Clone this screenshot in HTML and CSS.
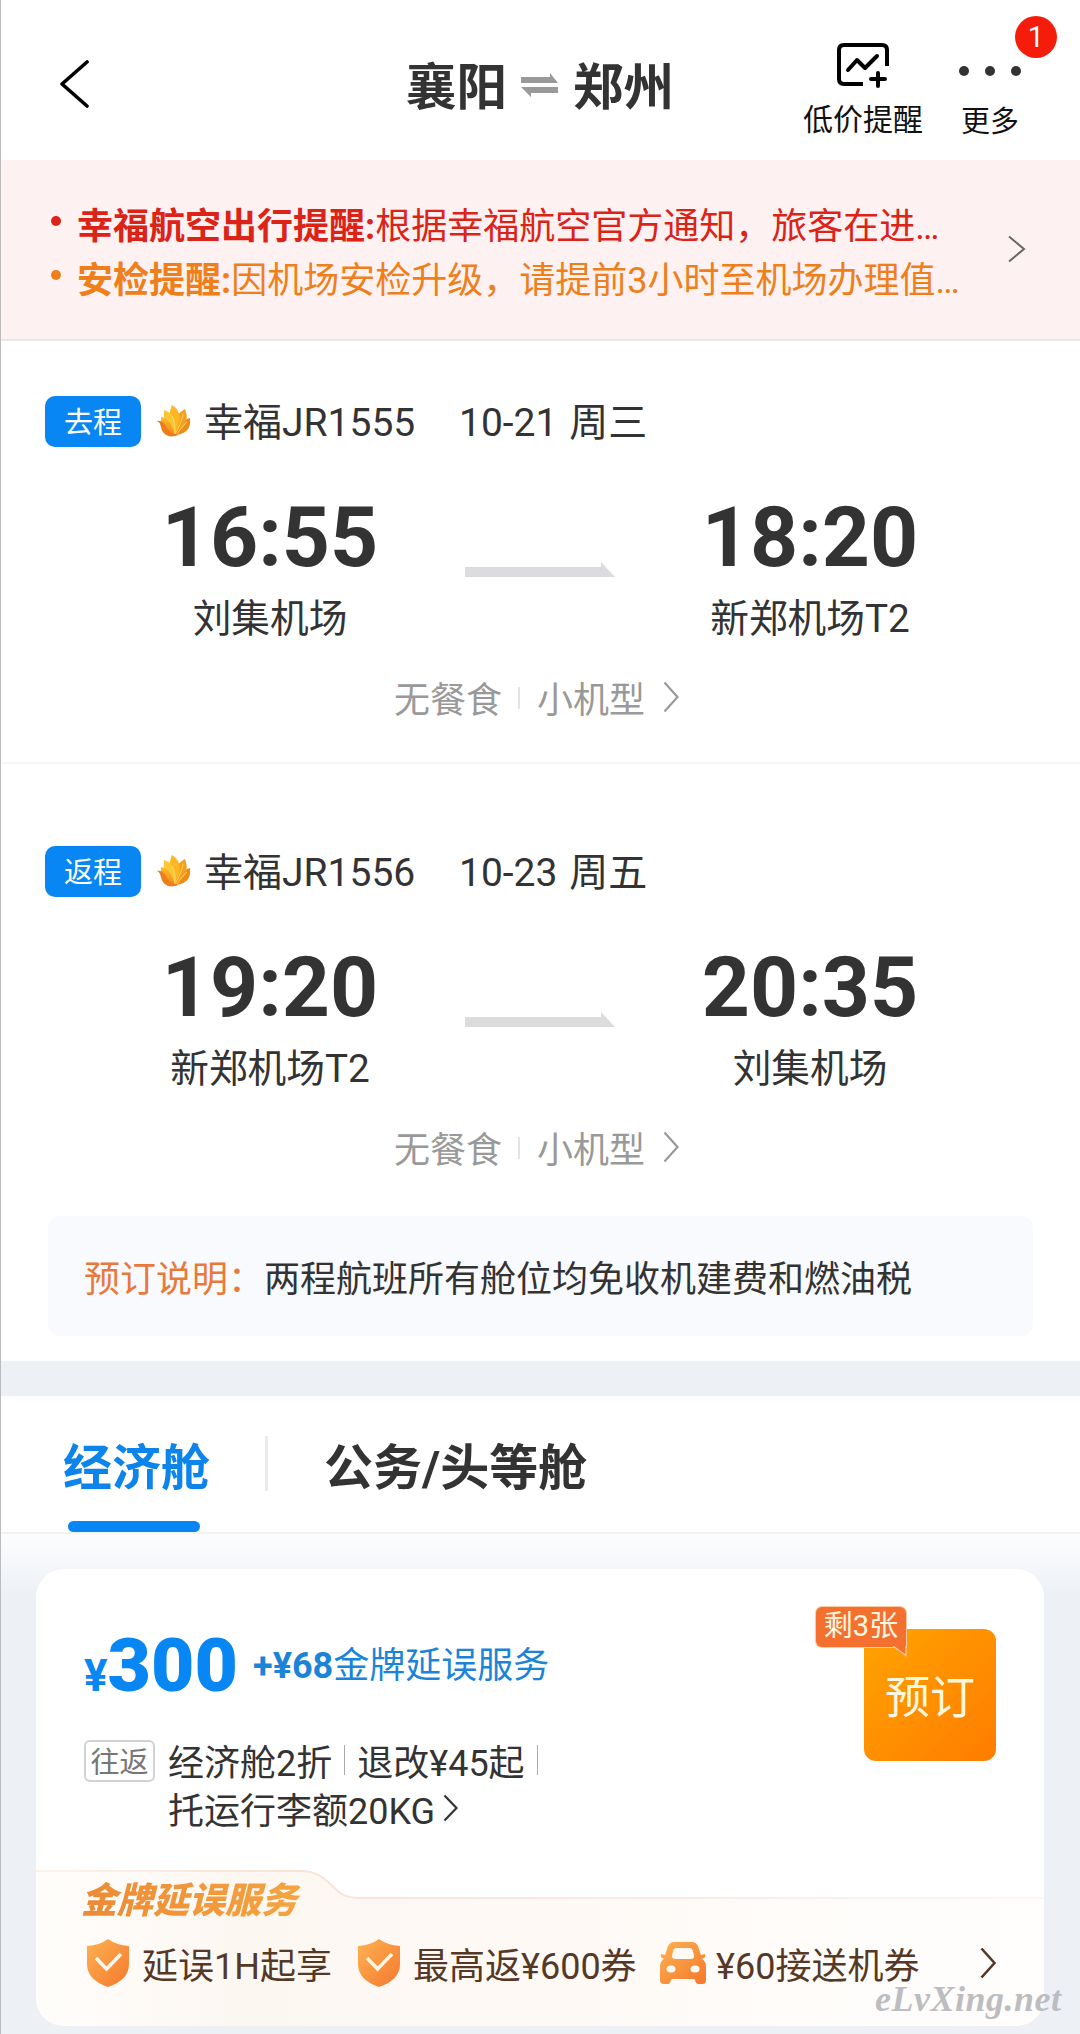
FILE: index.html
```html
<!DOCTYPE html>
<html lang="zh-CN">

<head>
    <meta charset="UTF-8">
    <title>襄阳 - 郑州</title>
    <link rel="stylesheet" href="styles.css">
</head>
<body>
    <!-- shared icons -->
    <svg class="defs" width="0" height="0">
        <defs>
            <linearGradient id="petal" x1="0" y1="0" x2="0" y2="1">
                <stop offset="0" stop-color="#fcbb28"/>
                <stop offset="1" stop-color="#f28a1c"/>
            </linearGradient>
            <linearGradient id="orange" x1="0" y1="0" x2="1" y2="1">
                <stop offset="0" stop-color="#fdb252"/>
                <stop offset="1" stop-color="#f5782d"/>
            </linearGradient>
            <linearGradient id="panel" x1="0" y1="0" x2="1" y2="0">
                <stop offset="0" stop-color="#fffdfb"/>
                <stop offset="0.2" stop-color="#fdf7f2"/>
                <stop offset="0.5" stop-color="#fef9f5"/>
                <stop offset="1" stop-color="#fffefd"/>
            </linearGradient>
            <linearGradient id="panel-line" x1="0" y1="0" x2="1" y2="0">
                <stop offset="0" stop-color="#fdf3ec"/>
                <stop offset="0.25" stop-color="#fae2d5"/>
                <stop offset="1" stop-color="#fdf5f0"/>
            </linearGradient>
        </defs>
        <symbol id="logo" viewBox="0 0 34 32">
            <path d="M33 13 C34 22 31 28 20 30 L17 30 C20 22 24 15 33 13Z" fill="#ef8c17"/>
            <path d="M28 4 C31 12 30 19 25 24 L17 30 C15 20 18 9 28 4Z" fill="#f79f1a"/>
            <path d="M15 0 C22 4 24 11 22 19 L17 30 C12 20 11 9 15 0Z" fill="#fcb824"/>
            <path d="M7 5 C14 7 18 13 18 20 L18 30 C9 24 6 15 7 5Z" fill="#fdc733"/>
            <path d="M4 12 C11 13 15 19 18 30 C9 28 3 21 4 12Z" fill="url(#petal)"/>
            <path d="M0 16 C5 15 8 19 10 23 C13 27 16 29 21 30 C12 34 5 29 4 22 C3 18 2 17 0 16Z" fill="#ec7d1b"/>
            <path d="M18 29 Q19 18 15 11 M18 29 Q25 17 26 9 M20 29 Q25 21 30 17" fill="none" stroke="#fdd978" stroke-width="0.8"/>
        </symbol>
        <symbol id="fly" viewBox="0 0 150 16">
            <path d="M0 5H136V0L150 15H0Z" fill="#dcdcde"/>
        </symbol>
        <symbol id="shield" viewBox="0 0 42 48">
            <path d="M21 0 Q29 6 42 7 V25 Q42 41 21 48 Q0 41 0 25 V7 Q13 6 21 0Z" fill="url(#orange)"/>
            <path d="M9 19 L19.5 30 L34 15" fill="none" stroke="#fff6e8" stroke-width="3.6"/>
        </symbol>
    </svg>

    <div class="page">
        <header class="header">
            <svg class="back" width="30" height="50" viewBox="0 0 30 50">
                <path d="M28 3 L3 25 L28 47" fill="none" stroke="#000" stroke-width="3.6" stroke-linecap="round" stroke-linejoin="round"/>
            </svg>
            <h1 class="title">
                <span>襄阳</span>
                <svg width="38" height="24" viewBox="0 0 38 24">
                    <path d="M0 4H29V0L37 10H0Z M0 14H37V20H10V24L0 14Z" fill="#999"/>
                </svg>
                <span>郑州</span>
            </h1>
            <div class="action remind">
                <svg width="54" height="48" viewBox="0 0 54 48">
                    <path d="M51 24V8Q51 3 46 3H8Q3 3 3 8V37Q3 42 8 42H27" fill="none" stroke="#000" stroke-width="4"/>
                    <path d="M12 28 L21 18 L29 26 L41 14" fill="none" stroke="#000" stroke-width="4" stroke-linejoin="round" stroke-linecap="round"/>
                    <path d="M42 31V44 M35 37H49" stroke="#000" stroke-width="4" stroke-linecap="round"/>
                </svg>
                <span>低价提醒</span>
            </div>
            <div class="action more">
                <div class="dots"><i></i><i></i><i></i></div>
                <span>更多</span>
                <b class="count">1</b>
            </div>
        </header>

        <section class="alerts">
            <ul>
                <li class="red"><b>幸福航空出行提醒:</b>根据幸福航空官方通知，旅客在进…</li>
                <li class="amber"><b>安检提醒:</b>因机场安检升级，请提前3小时至机场办理值…</li>
            </ul>
            <svg width="18" height="28" viewBox="0 0 18 28">
                <path d="M1 1.5 L16 14 L1 26.5" fill="none" stroke="#666" stroke-width="2"/>
            </svg>
        </section>

        <section class="flight">
            <div class="flight-head">
                <span class="badge">去程</span>
                <svg class="logo" width="34" height="32"><use href="#logo"/></svg>
                <span class="number">幸福JR1555</span>
                <span class="date">10-21 周三</span>
            </div>
            <div class="route">
                <div class="stop"><strong>16:55</strong><span>刘集机场</span></div>
                <svg width="150" height="16"><use href="#fly"/></svg>
                <div class="stop"><strong>18:20</strong><span>新郑机场T2</span></div>
            </div>
            <div class="meta">
                <span>无餐食</span><i></i><span>小机型</span>
                <svg width="17" height="32" viewBox="0 0 17 32">
                    <path d="M1.5 1.5 L14.5 16 L1.5 30.5" fill="none" stroke="#999" stroke-width="2.2"/>
                </svg>
            </div>
        </section>

        <section class="flight">
            <div class="flight-head">
                <span class="badge">返程</span>
                <svg class="logo" width="34" height="32"><use href="#logo"/></svg>
                <span class="number">幸福JR1556</span>
                <span class="date">10-23 周五</span>
            </div>
            <div class="route">
                <div class="stop"><strong>19:20</strong><span>新郑机场T2</span></div>
                <svg width="150" height="16"><use href="#fly"/></svg>
                <div class="stop"><strong>20:35</strong><span>刘集机场</span></div>
            </div>
            <div class="meta">
                <span>无餐食</span><i></i><span>小机型</span>
                <svg width="17" height="32" viewBox="0 0 17 32">
                    <path d="M1.5 1.5 L14.5 16 L1.5 30.5" fill="none" stroke="#999" stroke-width="2.2"/>
                </svg>
            </div>
        </section>

        <div class="notice"><em>预订说明：</em>两程航班所有舱位均免收机建费和燃油税</div>

        <nav class="tabs">
            <a class="tab active">经济舱</a>
            <i></i>
            <a class="tab">公务/头等舱</a>
        </nav>

        <main class="list">
            <article class="card">
                <div class="fare">
                    <div class="fare-info">
                        <div class="price">
                            <small>¥</small><strong>300</strong>
                            <span class="extra"><b>+¥68</b>金牌延误服务</span>
                        </div>
                        <div class="rules">
                            <span class="tag">往返</span>
                            <div class="rules-text">
                                <div class="rule"><span>经济舱2折</span><i></i><span>退改¥45起</span><i></i></div>
                                <div class="rule">
                                    <span>托运行李额20KG</span>
                                    <svg width="16" height="28" viewBox="0 0 16 28">
                                        <path d="M1.5 1.5 L13.5 14 L1.5 26.5" fill="none" stroke="#333" stroke-width="2.2"/>
                                    </svg>
                                </div>
                            </div>
                        </div>
                    </div>
                    <div class="book">
                        预订
                        <span class="left-count">剩3张
                            <svg width="14" height="11" viewBox="0 0 14 11">
                                <path d="M0 0 L13 9.5 V0" fill="#f4702f" stroke="#ffc9a3" stroke-width="1.2"/>
                            </svg>
                        </span>
                    </div>
                </div>
                <div class="gold">
                    <svg class="gold-bg" width="1008" height="156" viewBox="0 0 1008 156">
                        <path d="M0 1H264C286 1 292 13 303 22Q310 28 324 28H1008V156H0Z" fill="url(#panel)"/>
                        <path d="M0 1H264C286 1 292 13 303 22Q310 28 324 28H1008" fill="none" stroke="url(#panel-line)" stroke-width="2"/>
                    </svg>
                    <h2>金牌延误服务</h2>
                    <div class="perks">
                        <svg class="shield" width="42" height="48"><use href="#shield"/></svg>
                        <span class="perk-delay">延误1H起享</span>
                        <svg class="shield" width="42" height="48"><use href="#shield"/></svg>
                        <span class="perk-back">最高返¥600券</span>
                        <svg class="car" width="46" height="44" viewBox="0 0 46 44">
                            <path d="M14 1H32Q36 1 38 5L41 14L45 13V16L42 18Q46 20 46 26V39Q46 43 42 43H38Q36 43 35 39L34 38H12L11 39Q10 43 8 43H4Q0 43 0 39V26Q0 20 4 18L1 16V13L5 14L8 5Q10 1 14 1Z" fill="url(#orange)"/>
                            <path d="M16 7H30Q32 7 33 10L34 15Q34 18 31 18H15Q12 18 12 15L13 10Q14 7 16 7Z" fill="#fffaf5"/>
                            <ellipse cx="11" cy="28" rx="4.5" ry="3.5" fill="#fffaf5"/>
                            <ellipse cx="35" cy="28" rx="4.5" ry="3.5" fill="#fffaf5"/>
                        </svg>
                        <span>¥60接送机券</span>
                        <svg class="go" width="17" height="32" viewBox="0 0 17 32">
                            <path d="M1.5 1.5 L14.5 16 L1.5 30.5" fill="none" stroke="#553826" stroke-width="2.6"/>
                        </svg>
                    </div>
                </div>
            </article>
        </main>

        <div class="watermark">eLvXing.net</div>
    </div>
</body>
</html>
```

FILE: styles.css
```css
* {
    box-sizing: border-box;
}

body {
    margin: 0;
    background-color: #fff;
    color: #333;
    font-family: Roboto, "Noto Sans CJK SC", sans-serif;
    font-size: 36px;
}

svg {
    display: block;
    flex: none;
}

i, em {
    font-style: normal;
}

.defs {
    position: absolute;
}

.page {
    position: relative;
    width: 1080px;
    height: 2034px;
    overflow: hidden;
    border-left: 1px solid #bcbcbe;
    white-space: nowrap;
}

/* header */
.header {
    display: grid;
    grid-template-columns: 404px 272px 126px 118px 1fr;
    height: 160px;
    align-items: start;
}

.back {
    margin: 59px 0 0 58px;
}

.title {
    display: flex;
    align-items: center;
    gap: 14px;
    margin: 58px 0 0 1px;
    font-size: 50.5px;
    line-height: 60px;
    font-weight: bold;
}

.title svg {
    margin-top: -6px;
}

.action {
    position: relative;
    display: flex;
    flex-direction: column;
    align-items: center;
    color: #111;
    font-size: 30px;
    line-height: 36px;
}

.remind {
    width: 120px;
    margin: 42px 0 0 126px;
    grid-column: 3;
}

.remind span {
    margin-top: 12px;
}

.more {
    width: 60px;
    margin: 66px 0 0 157px;
    font-size: 29px;
    grid-column: 4;
}

.more span {
    margin-top: 28px;
}

.dots {
    display: flex;
    gap: 16px;
}

.dots i {
    width: 10px;
    height: 10px;
    border-radius: 50%;
    background-color: #333;
}

.count {
    position: absolute;
    left: 55px;
    top: -50px;
    width: 42px;
    height: 42px;
    border-radius: 50%;
    background-color: #f51c0c;
    color: #fff;
    font-size: 29px;
    font-weight: normal;
    line-height: 43px;
    text-align: center;
}

/* alerts */
.alerts {
    display: flex;
    align-items: center;
    height: 181px;
    padding-left: 50px;
    padding-right: 54px;
    justify-content: space-between;
    background-color: #fef1f1;
    border-bottom: 2px solid #ebe7e5;
}

.alerts ul {
    list-style: none;
    margin: 8px 0 0;
    padding: 0;
}

.alerts svg {
    margin-top: -1px;
}

.alerts li {
    display: flex;
    line-height: 54px;
}

.alerts li::before {
    content: "";
    width: 10px;
    height: 10px;
    margin: 16px 16px 0 0;
    border-radius: 50%;
    background-color: currentColor;
}

.red {
    color: #db2318;
}

.amber {
    color: #ee7f1a;
}

/* flights */
.flight {
    height: 423px;
    padding-top: 54px;
    border-bottom: 2px solid #f5f5f5;
}

.flight + .flight {
    height: 452px;
    padding-top: 81px;
    border-bottom: none;
}

.flight-head {
    display: flex;
    align-items: center;
    height: 52px;
    padding-left: 44px;
    font-size: 39px;
    line-height: 48px;
}

.badge {
    width: 96px;
    height: 51px;
    border-radius: 10px;
    background-color: #0886f4;
    color: #fff;
    font-size: 29px;
    line-height: 54px;
    text-align: center;
}

.logo {
    margin: 0 13px 0 16px;
}

.number {
    width: 255px;
    margin-top: 4px;
}

.date {
    margin-top: 3px;
    word-spacing: 2px;
}

.route {
    display: grid;
    grid-template-columns: 382px 156px 382px;
    padding-left: 80px;
}

.route svg {
    margin: 115px 0 0 2px;
}

.stop {
    display: flex;
    flex-direction: column;
    align-items: center;
    font-size: 38.7px;
    line-height: 50px;
}

.stop:first-child {
    padding-right: 4px;
}

.stop strong {
    margin-top: 41px;
    font-size: 84px;
    line-height: 100px;
}

.stop span {
    margin-top: 6px;
}

.meta {
    display: flex;
    align-items: center;
    height: 50px;
    margin-top: 28px;
    padding-left: 393px;
    color: #999;
}

.meta i {
    width: 2px;
    height: 22px;
    margin: 2px 17px 0 16px;
    background-color: #e4e4e4;
}

.meta svg {
    margin-left: 18px;
}

.notice {
    width: 985px;
    height: 120px;
    margin: 0 0 25px 47px;
    padding-left: 36px;
    border-radius: 12px;
    background-color: #f9fafe;
    line-height: 128px;
}

.notice em {
    color: #e9793b;
}

/* cabin tabs */
.tabs {
    display: flex;
    height: 173px;
    padding-left: 62px;
    border-top: 35px solid #edf0f5;
    border-bottom: 2px solid #f2f2f3;
    font-size: 49px;
    font-weight: bold;
}

.tab {
    display: flex;
    flex-direction: column;
    line-height: 60px;
    padding-top: 43px;
}

.active {
    width: 146px;
    color: #0c84ea;
}

.active::after {
    content: "";
    width: 132px;
    height: 12px;
    margin: 22px 0 0 5px;
    border-radius: 6px;
    background-color: #0886f4;
}

.tabs i {
    width: 3px;
    height: 55px;
    margin: 40px 56px 0 56px;
    background-color: #ebebee;
}

/* fares */
.list {
    height: 500px;
    padding: 35px 35px 0;
    background: linear-gradient(#fdfdfe, #edf1f6 60px);
}

.card {
    width: 1008px;
    height: 457px;
    border-radius: 28px;
    background-color: #fff;
    overflow: hidden;
}

.fare {
    display: flex;
    justify-content: space-between;
    height: 301px;
    padding: 60px 48px 0 48px;
}

.price {
    display: flex;
    align-items: baseline;
    height: 100px;
    color: #0886f4;
    font-weight: bold;
}

.price small {
    font-size: 44px;
}

.price strong {
    font-size: 75px;
    line-height: 73px;
}

.extra {
    color: #1b84d8;
    font-weight: normal;
    margin-left: 15px;
    position: relative;
    top: -13px;
}

.rules {
    display: flex;
    margin-top: 7px;
}

.tag {
    width: 71px;
    height: 42px;
    margin: 4px 13px 0 0;
    border: 2px solid #d2d2d2;
    border-radius: 6px;
    color: #777;
    font-size: 29px;
    line-height: 42px;
    text-align: center;
}

.rule {
    display: flex;
    align-items: center;
    height: 48px;
}

.rule i {
    width: 1px;
    height: 30px;
    margin: 0 12px;
    background-color: #aaa;
}

.rule svg {
    margin-left: 8px;
}

.book {
    position: relative;
    width: 132px;
    height: 132px;
    border-radius: 12px;
    background: linear-gradient(135deg, #ffa400, #ff7c00);
    color: #fff8e0;
    font-size: 45px;
    line-height: 140px;
    text-align: center;
}

.left-count {
    position: absolute;
    left: -48px;
    top: -22px;
    width: 90px;
    height: 40px;
    border-radius: 6px 6px 0 6px;
    background-color: #f4702f;
    box-shadow: 0 0 0 1px #ffc9a3;
    font-size: 29px;
    line-height: 38px;
}

.left-count svg {
    position: absolute;
    right: -1px;
    top: 39px;
}

.gold {
    position: relative;
    height: 156px;
    padding-top: 10px;
    color: #553826;
}

.gold-bg {
    position: absolute;
    left: 0;
    top: 0;
}

.gold h2 {
    position: relative;
    width: 230px;
    margin: 0 0 0 45px;
    background: linear-gradient(90deg, #ec8a35, #f5a540);
    -webkit-background-clip: text;
    background-clip: text;
    color: transparent;
    font-size: 36px;
    font-style: italic;
    font-weight: 900;
    line-height: 42px;
}

.perks {
    position: relative;
    display: flex;
    align-items: center;
    height: 50px;
    margin-top: 16px;
    padding-left: 51px;
}

.perks span {
    margin-top: -1px;
}

.shield {
    margin-right: 13px;
}

.perk-delay {
    width: 216px;
}

.perk-back {
    width: 247px;
}

.car {
    margin-right: 10px;
}

.go {
    margin-left: 61px;
}

.watermark {
    position: absolute;
    left: 874px;
    top: 1976px;
    color: #bdbdc1;
    font-family: "Liberation Serif", serif;
    font-size: 36px;
    font-style: italic;
    font-weight: bold;
    letter-spacing: 0.5px;
    line-height: 46px;
}
```
